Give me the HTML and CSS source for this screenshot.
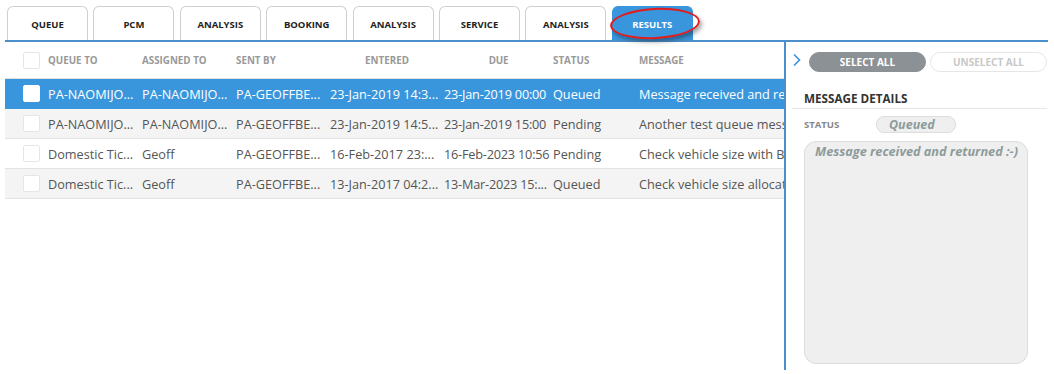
FILE: index.html
```html
<!DOCTYPE html>
<html lang="en">
    <head>
        <meta charset="UTF-8">
        <title>Queue Results</title>
        <link rel="stylesheet" href="styles.css">
    </head>
    <body>
        <div class="tabs">
            <div class="tab">QUEUE</div>
            <div class="tab">PCM</div>
            <div class="tab">ANALYSIS</div>
            <div class="tab">BOOKING</div>
            <div class="tab">ANALYSIS</div>
            <div class="tab">SERVICE</div>
            <div class="tab">ANALYSIS</div>
            <div class="tab active">RESULTS<span class="circle"></span></div>
        </div>

        <div class="main">
            <div class="grid">
                <div class="row head">
                    <div class="cell check"><span class="box"></span></div>
                    <div class="cell c1">QUEUE TO</div>
                    <div class="cell c2">ASSIGNED TO</div>
                    <div class="cell c3">SENT BY</div>
                    <div class="cell c4 center">ENTERED</div>
                    <div class="cell c5 center">DUE</div>
                    <div class="cell c6">STATUS</div>
                    <div class="cell c7">MESSAGE</div>
                </div>
                <div class="row selected">
                    <div class="cell check"><span class="box"></span></div>
                    <div class="cell c1">PA-NAOMIJO...</div>
                    <div class="cell c2">PA-NAOMIJO...</div>
                    <div class="cell c3">PA-GEOFFBE...</div>
                    <div class="cell c4">23-Jan-2019 14:3...</div>
                    <div class="cell c5">23-Jan-2019 00:00</div>
                    <div class="cell c6">Queued</div>
                    <div class="cell c7">Message received and returned :-)</div>
                </div>
                <div class="row alt">
                    <div class="cell check"><span class="box"></span></div>
                    <div class="cell c1">PA-NAOMIJO...</div>
                    <div class="cell c2">PA-NAOMIJO...</div>
                    <div class="cell c3">PA-GEOFFBE...</div>
                    <div class="cell c4">23-Jan-2019 14:5...</div>
                    <div class="cell c5">23-Jan-2019 15:00</div>
                    <div class="cell c6">Pending</div>
                    <div class="cell c7">Another test queue message</div>
                </div>
                <div class="row">
                    <div class="cell check"><span class="box"></span></div>
                    <div class="cell c1">Domestic Tic...</div>
                    <div class="cell c2">Geoff</div>
                    <div class="cell c3">PA-GEOFFBE...</div>
                    <div class="cell c4">16-Feb-2017 23:...</div>
                    <div class="cell c5">16-Feb-2023 10:56</div>
                    <div class="cell c6">Pending</div>
                    <div class="cell c7">Check vehicle size with Booking</div>
                </div>
                <div class="row alt">
                    <div class="cell check"><span class="box"></span></div>
                    <div class="cell c1">Domestic Tic...</div>
                    <div class="cell c2">Geoff</div>
                    <div class="cell c3">PA-GEOFFBE...</div>
                    <div class="cell c4">13-Jan-2017 04:2...</div>
                    <div class="cell c5">13-Mar-2023 15:...</div>
                    <div class="cell c6">Queued</div>
                    <div class="cell c7">Check vehicle size allocation</div>
                </div>
            </div>

            <div class="panel">
                <div class="actions">
                    <svg class="chevron" width="10" height="14" viewBox="0 0 10 14">
                        <path d="M2 1.5 L7.5 7 L2 12.5" fill="none" stroke="#3a8fd6" stroke-width="1.6"/>
                    </svg>
                    <button class="btn primary">SELECT ALL</button>
                    <button class="btn">UNSELECT ALL</button>
                </div>
                <h3>MESSAGE DETAILS</h3>
                <div class="field">
                    <span class="label">STATUS</span>
                    <span class="pill">Queued</span>
                </div>
                <div class="textbox">Message received and returned :-)</div>
            </div>
        </div>
    </body>
</html>
```

FILE: styles.css
```css
body {
    font-family: "Open Sans", Arial, sans-serif;
    margin: 0;
    padding: 6px 6px 0 5px;
    background-color: #fff;
    color: #555;
}
.tabs {
    display: flex;
    gap: 5.4px;
    padding-left: 2px;
    border-bottom: 2px solid #4a8fcb;
}
.tab {
    position: relative;
    width: 79px;
    height: 33px;
    line-height: 35px;
    border: 1px solid #cfcfcf;
    border-bottom: none;
    border-radius: 6px 6px 0 0;
    text-align: center;
    font-size: 9.5px;
    font-weight: 700;
    color: #222;
}
.tab.active {
    background-color: #3a96dc;
    border-color: #3a96dc;
    color: #fff;
}
.circle {
    position: absolute;
    left: -3px;
    top: 1px;
    width: 86px;
    height: 27px;
    border: 2px solid #e31b1b;
    border-radius: 50%;
    transform: rotate(-3deg);
    box-shadow: 2px 3px 4px rgba(0, 0, 0, 0.35);
}
.main {
    display: flex;
    height: 328px;
}
.grid {
    width: 779px;
    border-right: 2px solid #4a8fcb;
}
.row {
    display: flex;
    align-items: center;
    height: 29px;
    border-bottom: 1px solid #e2e2e2;
    font-size: 12.7px;
}
.row.head {
    height: 36px;
    font-size: 9.8px;
    font-weight: 700;
    color: #999;
}
.row.alt {
    background-color: #f4f4f4;
}
.row.selected {
    background-color: #3a96dc;
    color: #fff;
    border-bottom-color: #3a96dc;
}
.cell {
    flex-shrink: 0;
    white-space: nowrap;
    overflow: hidden;
}
.check {
    width: 18px;
    padding-left: 18px;
    margin-right: 7px;
    display: flex;
}
.box {
    width: 15px;
    height: 15px;
    border: 1px solid #e6e6e6;
    border-radius: 2px;
    background-color: #fff;
}
.selected .box {
    border-color: #fff;
}
.c1, .c2, .c3 { width: 94px; }
.c4 { width: 114px; }
.c5 {
    width: 109px;
    letter-spacing: -0.2px;
}
.c6 { width: 86px; }
.c7 { flex: 1; }
.center { text-align: center; }
.panel {
    flex: 1;
    padding: 10px 6px 0 6px;
}
.actions {
    display: flex;
    align-items: center;
    gap: 4px;
}
.chevron {
    margin-right: 3px;
    margin-top: -4px;
}
.btn {
    width: 117px;
    height: 20px;
    border-radius: 10px;
    border: 1px solid #e6e6e6;
    background-color: #fff;
    color: #c8c8c8;
    font-family: "Open Sans", Arial, sans-serif;
    font-size: 10px;
    font-weight: 700;
    padding: 0;
}
.btn.primary {
    background-color: #8c9195;
    border-color: #8c9195;
    color: #fff;
}
h3 {
    margin: 18px 0 0 0;
    padding: 0 0 2px 12px;
    font-size: 11.7px;
    font-weight: 700;
    color: #333;
    border-bottom: 1px solid #e6e6e6;
}
.field {
    display: flex;
    align-items: center;
    margin: 7px 0 0 12px;
}
.label {
    width: 72px;
    font-size: 9.5px;
    font-weight: 700;
    color: #888;
}
.pill {
    width: 66px;
    height: 15px;
    line-height: 15px;
    padding-left: 12px;
    border: 1px solid #ddd;
    border-radius: 8px;
    background-color: #efefef;
    color: #8d9b9b;
    font-size: 12.5px;
    font-style: italic;
    font-weight: 700;
}
.textbox {
    margin: 8px 0 0 12px;
    width: 206px;
    height: 221px;
    padding: 0 6px 0 10px;
    border: 1px solid #dcdcdc;
    border-radius: 12px;
    background-color: #efefef;
    color: #8d9b9b;
    font-size: 12.7px;
    font-style: italic;
    font-weight: 700;
}
```
